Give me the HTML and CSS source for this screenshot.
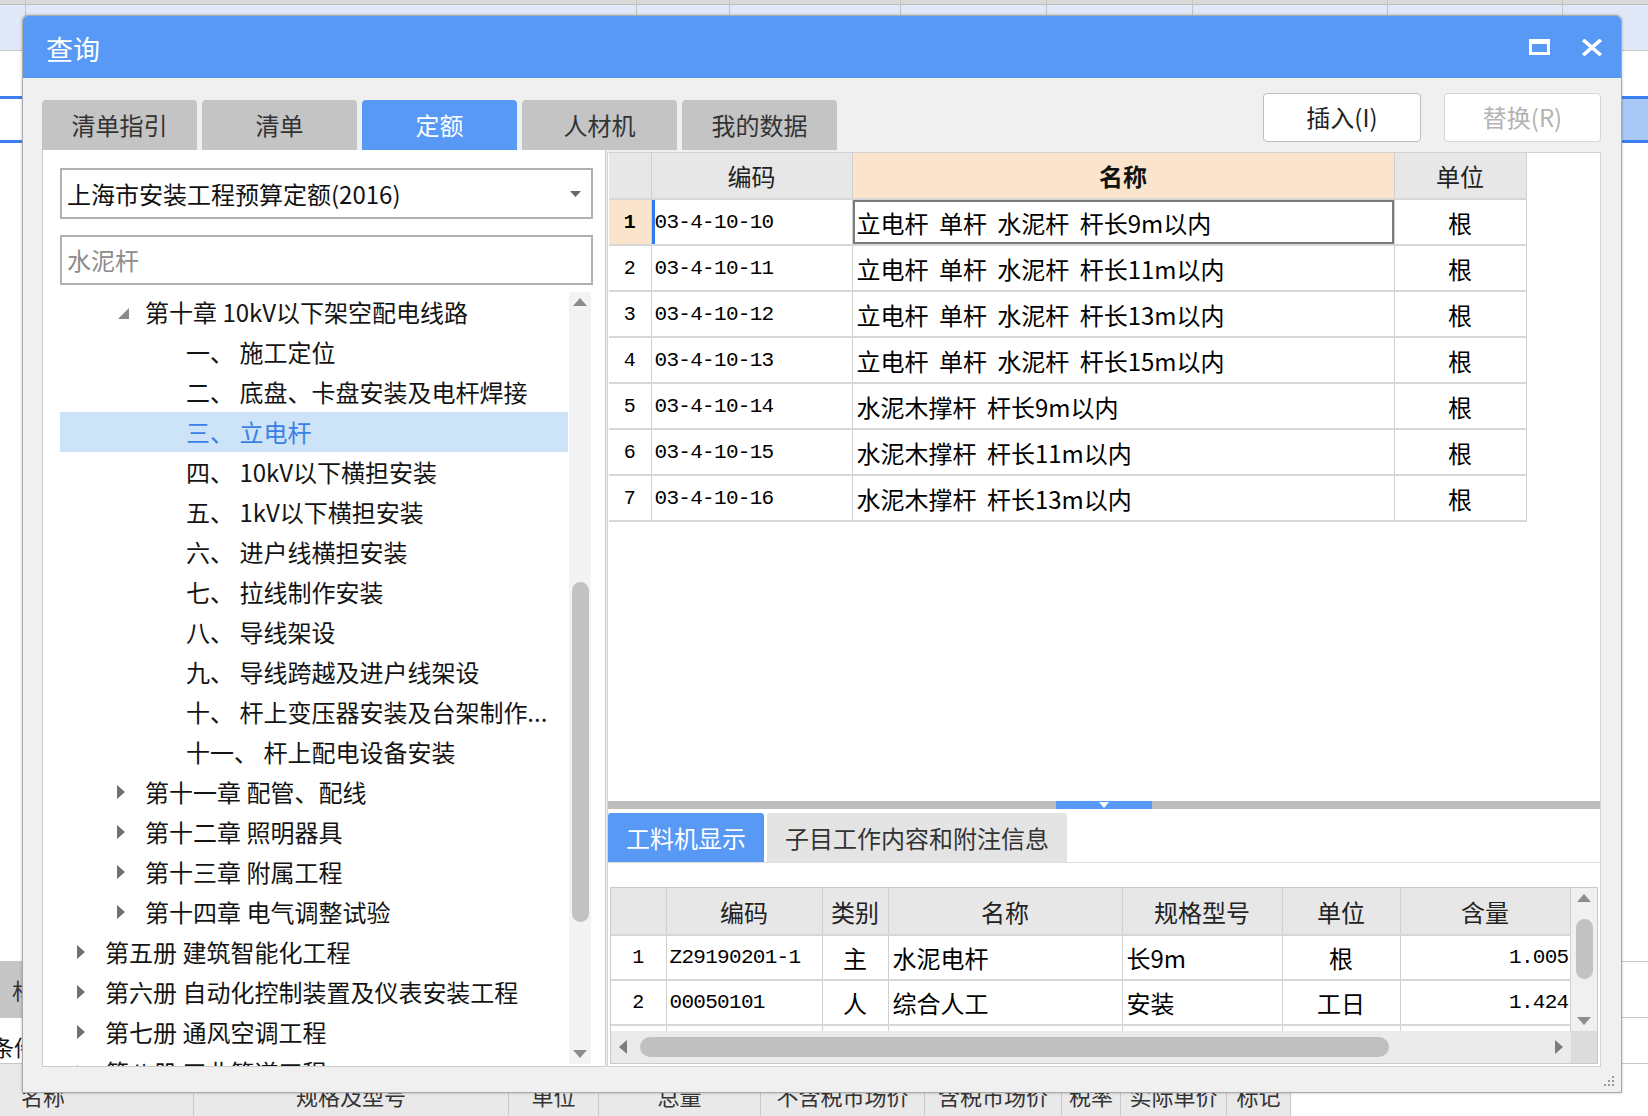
FILE: index.html
```html
<!DOCTYPE html>
<html lang="zh-CN">
<head>
<meta charset="utf-8">
<title>查询</title>
<link rel="stylesheet" href="styles.css">
</head>
<body>
<div class="app">
  <div class="app-head">
    <span class="hc" style="width:26px"></span><span class="hc" style="width:611px"></span><span class="hc" style="width:93px"></span><span class="hc" style="width:171px"></span><span class="hc" style="width:146px"></span><span class="hc" style="width:146px"></span><span class="hc" style="width:195px"></span><span class="hc" style="width:175px"></span><span class="hc last"></span>
  </div>
  <div class="app-white"></div>
  <div class="app-sel"><span class="sel-left"></span><span class="sel-right"></span></div>
  <div class="app-fill"></div>
  <div class="app-grey"><span class="grey-cell">材</span><span class="grey-rest"></span></div>
  <div class="app-cond"><span class="cond-text">条件</span></div>
  <div class="app-foot">
    <span class="fc first" style="width:194px">名称</span><span class="fc" style="width:315px">规格及型号</span><span class="fc" style="width:90px">单位</span><span class="fc" style="width:162px">总量</span><span class="fc" style="width:164px">不含税市场价</span><span class="fc" style="width:137px">含税市场价</span><span class="fc" style="width:59px">税率</span><span class="fc" style="width:106px">实际单价</span><span class="fc" style="width:64px">标记</span><span class="fc-rest"></span>
  </div>
</div>

<div class="dialog">
  <div class="titlebar">
    <span class="title">查询</span>
    <span class="tb-icons">
      <svg class="ico-max" width="21" height="16" viewBox="0 0 21 16"><rect x="1.5" y="1.5" width="18" height="13" fill="none" stroke="#fff" stroke-width="3"/><rect x="1" y="1" width="19" height="4" fill="#fff"/></svg>
      <svg class="ico-close" width="20" height="17" viewBox="0 0 20 17"><path d="M2.5 2 L17.5 15 M17.5 2 L2.5 15" stroke="#fff" stroke-width="3.6" stroke-linecap="square"/></svg>
    </span>
  </div>
  <div class="body">
    <div class="toolbar">
      <div class="tabs">
        <span class="tab">清单指引</span>
        <span class="tab">清单</span>
        <span class="tab active">定额</span>
        <span class="tab">人材机</span>
        <span class="tab">我的数据</span>
      </div>
      <div class="btns">
        <span class="btn">插入(I)</span>
        <span class="btn disabled">替换(R)</span>
      </div>
    </div>
    <div class="content">
      <div class="left">
        <div class="select"><span>上海市安装工程预算定额(2016)</span><svg class="caret" width="11" height="6" viewBox="0 0 11 6"><path d="M0 0 H11 L5.5 6 Z" fill="#6a6a6a"/></svg></div>
        <div class="search">水泥杆</div>
        <div class="tree-wrap">
          <div class="tree">
            <div class="node lv1"><span class="arr"><svg width="11" height="11" viewBox="0 0 11 11"><path d="M11 0 V11 H0 Z" fill="#8a8a8a"/></svg></span>第十章 10kV以下架空配电线路</div>
            <div class="node lv2">一、 施工定位</div>
            <div class="node lv2">二、 底盘、卡盘安装及电杆焊接</div>
            <div class="node lv2 sel">三、 立电杆</div>
            <div class="node lv2">四、 10kV以下横担安装</div>
            <div class="node lv2">五、 1kV以下横担安装</div>
            <div class="node lv2">六、 进户线横担安装</div>
            <div class="node lv2">七、 拉线制作安装</div>
            <div class="node lv2">八、 导线架设</div>
            <div class="node lv2">九、 导线跨越及进户线架设</div>
            <div class="node lv2">十、 杆上变压器安装及台架制作...</div>
            <div class="node lv2">十一、 杆上配电设备安装</div>
            <div class="node lv1"><span class="arr"><svg width="8" height="14" viewBox="0 0 8 14"><path d="M0 0 L8 7 L0 14 Z" fill="#707070"/></svg></span>第十一章 配管、配线</div>
            <div class="node lv1"><span class="arr"><svg width="8" height="14" viewBox="0 0 8 14"><path d="M0 0 L8 7 L0 14 Z" fill="#707070"/></svg></span>第十二章 照明器具</div>
            <div class="node lv1"><span class="arr"><svg width="8" height="14" viewBox="0 0 8 14"><path d="M0 0 L8 7 L0 14 Z" fill="#707070"/></svg></span>第十三章 附属工程</div>
            <div class="node lv1"><span class="arr"><svg width="8" height="14" viewBox="0 0 8 14"><path d="M0 0 L8 7 L0 14 Z" fill="#707070"/></svg></span>第十四章 电气调整试验</div>
            <div class="node lv0"><span class="arr"><svg width="8" height="14" viewBox="0 0 8 14"><path d="M0 0 L8 7 L0 14 Z" fill="#707070"/></svg></span>第五册 建筑智能化工程</div>
            <div class="node lv0"><span class="arr"><svg width="8" height="14" viewBox="0 0 8 14"><path d="M0 0 L8 7 L0 14 Z" fill="#707070"/></svg></span>第六册 自动化控制装置及仪表安装工程</div>
            <div class="node lv0"><span class="arr"><svg width="8" height="14" viewBox="0 0 8 14"><path d="M0 0 L8 7 L0 14 Z" fill="#707070"/></svg></span>第七册 通风空调工程</div>
            <div class="node lv0"><span class="arr"><svg width="8" height="14" viewBox="0 0 8 14"><path d="M0 0 L8 7 L0 14 Z" fill="#707070"/></svg></span>第八册 工业管道工程</div>
          </div>
          <div class="vscroll">
            <svg class="sarr" width="14" height="8" viewBox="0 0 14 8"><path d="M0 8 L7 0 L14 8 Z" fill="#8c8c8c"/></svg>
            <div class="strack"><div class="sthumb tree-thumb"></div></div>
            <svg class="sarr" width="14" height="8" viewBox="0 0 14 8"><path d="M0 0 L7 8 L14 0 Z" fill="#8c8c8c"/></svg>
          </div>
        </div>
      </div>
      <div class="right">
        <div class="grid-area">
          <table class="grid">
            <colgroup><col style="width:42px"><col style="width:201px"><col style="width:542px"><col style="width:132px"></colgroup>
            <thead><tr><th></th><th>编码</th><th class="hl">名称</th><th>单位</th></tr></thead>
            <tbody>
              <tr><td class="num cur">1</td><td class="code curc">03-4-10-10</td><td class="name selc">立电杆 单杆 水泥杆 杆长9m以内</td><td class="unit">根</td></tr>
              <tr><td class="num">2</td><td class="code">03-4-10-11</td><td class="name">立电杆 单杆 水泥杆 杆长11m以内</td><td class="unit">根</td></tr>
              <tr><td class="num">3</td><td class="code">03-4-10-12</td><td class="name">立电杆 单杆 水泥杆 杆长13m以内</td><td class="unit">根</td></tr>
              <tr><td class="num">4</td><td class="code">03-4-10-13</td><td class="name">立电杆 单杆 水泥杆 杆长15m以内</td><td class="unit">根</td></tr>
              <tr><td class="num">5</td><td class="code">03-4-10-14</td><td class="name">水泥木撑杆 杆长9m以内</td><td class="unit">根</td></tr>
              <tr><td class="num">6</td><td class="code">03-4-10-15</td><td class="name">水泥木撑杆 杆长11m以内</td><td class="unit">根</td></tr>
              <tr><td class="num">7</td><td class="code">03-4-10-16</td><td class="name">水泥木撑杆 杆长13m以内</td><td class="unit">根</td></tr>
            </tbody>
          </table>
        </div>
        <div class="splitter"><span class="grip"><svg width="10" height="6" viewBox="0 0 10 6"><path d="M0 0 H10 L5 6 Z" fill="#fff"/></svg></span></div>
        <div class="btabs">
          <span class="btab active">工料机显示</span>
          <span class="btab">子目工作内容和附注信息</span>
        </div>
        <div class="bframe">
          <div class="bmain">
            <div class="bclip">
              <table class="grid bgrid">
                <colgroup><col style="width:55px"><col style="width:156px"><col style="width:66px"><col style="width:234px"><col style="width:160px"><col style="width:118px"><col style="width:170px"></colgroup>
                <thead><tr><th></th><th>编码</th><th>类别</th><th>名称</th><th>规格型号</th><th>单位</th><th>含量</th></tr></thead>
                <tbody>
                  <tr><td class="num">1</td><td class="code">Z29190201-1</td><td class="unit">主</td><td class="name">水泥电杆</td><td class="name">长9m</td><td class="unit">根</td><td class="qty">1.005</td></tr>
                  <tr><td class="num">2</td><td class="code">00050101</td><td class="unit">人</td><td class="name">综合人工</td><td class="name">安装</td><td class="unit">工日</td><td class="qty">1.424</td></tr>
                  <tr><td class="num"></td><td class="code"></td><td></td><td></td><td></td><td></td><td></td></tr>
                </tbody>
              </table>
            </div>
            <div class="vscroll small">
              <svg class="sarr" width="14" height="8" viewBox="0 0 14 8"><path d="M0 8 L7 0 L14 8 Z" fill="#8c8c8c"/></svg>
              <div class="strack"><div class="sthumb b-thumb"></div></div>
              <svg class="sarr" width="14" height="8" viewBox="0 0 14 8"><path d="M0 0 L7 8 L14 0 Z" fill="#8c8c8c"/></svg>
            </div>
          </div>
          <div class="hscroll">
            <span class="hbtn"><svg width="8" height="14" viewBox="0 0 8 14"><path d="M8 0 L0 7 L8 14 Z" fill="#7c7c7c"/></svg></span>
            <span class="hthumb"></span>
            <span class="hgap"></span>
            <span class="hbtn"><svg width="8" height="14" viewBox="0 0 8 14"><path d="M0 0 L8 7 L0 14 Z" fill="#7c7c7c"/></svg></span>
            <span class="corner"></span>
          </div>
        </div>
      </div>
    </div>
  </div>
  <svg class="resize" width="12" height="12" viewBox="0 0 12 12"><g fill="#9a9a9a"><rect x="9" y="1" width="2" height="2"/><rect x="5" y="5" width="2" height="2"/><rect x="9" y="5" width="2" height="2"/><rect x="1" y="9" width="2" height="2"/><rect x="5" y="9" width="2" height="2"/><rect x="9" y="9" width="2" height="2"/></g></svg>
</div>
</body>
</html>
```

FILE: styles.css
```css
html, body {
  margin: 0;
  padding: 0;
}
body {
  width: 1648px;
  height: 1116px;
  overflow: hidden;
  position: relative;
  background: #fff;
  font-family: "Noto Sans CJK SC", "Noto Sans", sans-serif;
  color: #1a1a1a;
}
svg { display: block; }

/* ---------- background application ---------- */
.app {
  display: flex;
  flex-direction: column;
  height: 1116px;
}
.app-head {
  height: 50px;
  display: flex;
  background: linear-gradient(#d9d9d9 0 4px, #bdbdbd 4px 5px, #e1e9f9 5px);
  border-bottom: 1px solid #c6c6c6;
}
.hc {
  height: 100%;
  border-right: 1px solid #c4c4c4;
  box-sizing: border-box;
}
.hc.last { flex: 1; border-right: none; }
.app-white { height: 45px; }
.app-sel {
  height: 41px;
  border-top: 3px solid #3a7ef0;
  border-bottom: 3px solid #3a7ef0;
  display: flex;
}
.sel-left { width: 40px; background: #fff; }
.sel-right { flex: 1; background: #a8c8f5; }
.app-fill {
  height: 818px;
  border-bottom: 1px solid #c8c8c8;
}
.app-grey {
  height: 55px;
  display: flex;
  border-bottom: 1px solid #c8c8c8;
}
.grey-cell {
  width: 60px;
  background: #c6c6c6;
  font-size: 22px;
  line-height: 55px;
  padding-left: 12px;
  color: #333;
  box-sizing: border-box;
}
.grey-rest { flex: 1; }
.app-cond {
  height: 45px;
  border-bottom: 1px solid #c8c8c8;
}
.cond-text {
  display: block;
  font-size: 22px;
  line-height: 45px;
  margin-left: -8px;
  padding-top: 6px;
  color: #111;
}
.app-foot {
  flex: 1;
  display: flex;
}
.fc {
  background: #e9e9e9;
  border-right: 1px solid #c9c9c9;
  box-sizing: border-box;
  font-size: 22px;
  color: #333;
  text-align: center;
  padding-top: 15px;
  white-space: nowrap;
  overflow: hidden;
}
.fc.first { text-align: left; padding-left: 21px; }
.fc-rest { flex: 1; }

/* ---------- dialog window ---------- */
.dialog {
  position: absolute;
  left: 22px;
  top: 15px;
  width: 1600px;
  height: 1078px;
  box-sizing: border-box;
  border: 1px solid #a9a9a9;
  border-radius: 6px 6px 0 0;
  background: #f0f0f0;
  box-shadow: 0 0 3px rgba(0, 0, 0, 0.25);
  display: flex;
  flex-direction: column;
}
.titlebar {
  height: 62px;
  flex: none;
  background: #5799f5;
  border-radius: 5px 5px 0 0;
  display: flex;
  align-items: center;
  padding: 0 19px 0 23px;
}
.title {
  color: #fff;
  font-size: 27px;
  line-height: 32px;
  padding-top: 3px;
  flex: 1;
}
.tb-icons {
  display: flex;
  align-items: center;
  gap: 32px;
}

.body {
  flex: 1;
  display: flex;
  flex-direction: column;
  padding: 22px 20px 25px 19px;
  min-height: 0;
}
.toolbar {
  height: 50px;
  flex: none;
  display: flex;
}
.tabs {
  display: flex;
  gap: 5px;
  align-items: flex-end;
}
.tab {
  width: 155px;
  height: 50px;
  box-sizing: border-box;
  background: #c4c4c4;
  border-radius: 4px 4px 0 0;
  color: #333;
  font-size: 24px;
  line-height: 50px;
  text-align: center;
}
.tab.active {
  background: #5799f5;
  color: #fff;
}
.btns {
  margin-left: auto;
  display: flex;
  gap: 23px;
  margin-top: -7px;
}
.btn {
  width: 158px;
  height: 49px;
  box-sizing: border-box;
  background: #fff;
  border: 1px solid #bdbdbd;
  border-radius: 4px;
  font-size: 24px;
  line-height: 46px;
  text-align: center;
  color: #222;
}
.btn.disabled {
  width: 157px;
  color: #b3b3b3;
  border-color: #d5d5d5;
}

.content {
  flex: 1;
  display: flex;
  min-height: 0;
}

/* left panel */
.left {
  width: 564px;
  flex: none;
  box-sizing: border-box;
  background: #fff;
  border: 1px solid #cbcbcb;
  border-top: none;
  padding: 18px 0 0 17px;
  display: flex;
  flex-direction: column;
  overflow: hidden;
}
.select {
  width: 533px;
  height: 51px;
  flex: none;
  box-sizing: border-box;
  border: 2px solid #b0b0b0;
  display: flex;
  align-items: center;
  padding: 0 7px 0 5px;
  font-size: 24px;
  color: #111;
}
.select span { flex: 1; white-space: nowrap; }
.caret { margin-right: 3px; }
.search {
  width: 533px;
  height: 50px;
  flex: none;
  margin-top: 16px;
  box-sizing: border-box;
  border: 2px solid #b0b0b0;
  padding-left: 5px;
  font-size: 24px;
  line-height: 46px;
  color: #8c8c8c;
}
.tree-wrap {
  flex: 1;
  margin-top: 7px;
  display: flex;
  min-height: 0;
}
.tree {
  width: 508px;
  overflow: hidden;
}
.node {
  height: 40px;
  line-height: 40px;
  font-size: 24px;
  white-space: nowrap;
  color: #141414;
  display: flex;
  align-items: center;
}
.node.lv0 { padding-left: 17px; }
.node.lv1 { padding-left: 57px; }
.node.lv2 { padding-left: 126px; }
.node.sel {
  background: #cde3f8;
  color: #3a7fe6;
}
.arr {
  width: 28px;
  flex: none;
  display: flex;
  align-items: center;
}
.node.lv1:first-child .arr { padding-left: 1px; width: 27px; padding-top: 3px; }

.vscroll {
  width: 22px;
  flex: none;
  margin-left: 1px;
  margin-bottom: 2px;
  display: flex;
  flex-direction: column;
  align-items: center;
  background: #f3f3f3;
}
.sarr { flex: none; margin: 6px 0; }
.strack {
  flex: 1;
  width: 100%;
  display: flex;
  flex-direction: column;
  align-items: center;
}
.sthumb {
  width: 17px;
  background: #c2c2c2;
  border-radius: 9px;
}
.tree-thumb { margin-top: 270px; height: 340px; }

/* right panel */
.right {
  flex: 1;
  margin-left: 1px;
  margin-top: 2px;
  box-sizing: border-box;
  border: 1px solid #d3d3d3;
  background: #fff;
  display: flex;
  flex-direction: column;
  min-width: 0;
}
.grid-area {
  height: 648px;
  flex: none;
  padding-left: 1px;
}
.grid {
  border-collapse: collapse;
  table-layout: fixed;
}
.grid-area .grid { width: 917px; }
.grid th {
  height: 45px;
  padding: 0;
  background: #e7e7e7;
  border: 1px solid #cfcfcf;
  border-top: none;
  border-bottom: 2px solid #d6d6d6;
  font-weight: normal;
  font-size: 24px;
  color: #222;
}
.grid th:first-child { border-left: none; }
.grid th.hl { background: #fae5cc; font-weight: bold; color: #111; }
.grid td {
  height: 44px;
  padding: 0;
  border: 1px solid #cfcfcf;
  border-top: none;
  border-bottom: 2px solid #d8d8d8;
  font-size: 24px;
  color: #000;
  white-space: nowrap;
  overflow: hidden;
}
.grid td:first-child { border-left: none; }
.grid td.num {
  text-align: center;
  font-family: "Liberation Mono", monospace;
  font-size: 20px;
}
.grid td.num.cur {
  background: #fae5cc;
  font-weight: bold;
}
.grid td.code {
  font-family: "Liberation Mono", "Noto Sans CJK SC", monospace;
  font-size: 21px;
  letter-spacing: -0.7px;
  padding-left: 3px;
}
.grid td.curc { box-shadow: inset 3px 0 0 #2f7cf2; }
.grid td.name { padding-left: 4px; word-spacing: 5px; }
.grid td.selc {
  box-shadow: inset 0 0 0 2px #7b7b7b, inset 0 2px 0 #8fb5ee;
}
.grid td.unit { text-align: center; }
.grid td.qty {
  text-align: right;
  font-family: "Liberation Mono", monospace;
  font-size: 21px;
  letter-spacing: -0.7px;
  padding-right: 1px;
}

.splitter {
  height: 8px;
  flex: none;
  background: #bdbdbd;
  display: flex;
  justify-content: center;
}
.grip {
  width: 96px;
  height: 8px;
  background: #5799f5;
  display: flex;
  justify-content: center;
  align-items: center;
}
.btabs {
  margin-top: 4px;
  height: 49px;
  flex: none;
  display: flex;
  gap: 3px;
  border-bottom: 1px solid #dedede;
}
.btab {
  width: 300px;
  height: 49px;
  background: #e4e4e4;
  border-radius: 3px 3px 0 0;
  font-size: 24px;
  line-height: 49px;
  text-align: center;
  color: #333;
}
.btab.active {
  width: 156px;
  background: #5799f5;
  color: #fff;
}
.bframe {
  margin: 24px 2px 2px 2px;
  flex: 1;
  box-sizing: border-box;
  border: 1px solid #c9c9c9;
  display: flex;
  flex-direction: column;
  min-height: 0;
}
.bmain {
  height: 143px;
  flex: none;
  display: flex;
}
.bclip {
  flex: 1;
  min-width: 0;
  overflow: hidden;
}
.bgrid { width: 959px; }
.bgrid th { height: 46px; }
.bgrid td { height: 43px; }
.vscroll.small {
  width: 26px;
  margin: 0;
  background: #f0f0f0;
}
.b-thumb { margin-top: 11px; height: 60px; }
.hscroll {
  flex: 1;
  display: flex;
  align-items: center;
  background: #ebebeb;
}
.hbtn {
  width: 24px;
  flex: none;
  display: flex;
  justify-content: center;
}
.hthumb {
  width: 749px;
  height: 20px;
  flex: none;
  margin-left: 5px;
  background: #c0c0c0;
  border-radius: 10px;
}
.hgap { flex: 1; }
.corner {
  width: 26px;
  height: 100%;
  flex: none;
  background: #dcdcdc;
}
.resize {
  position: absolute;
  right: 6px;
  bottom: 5px;
}
```
